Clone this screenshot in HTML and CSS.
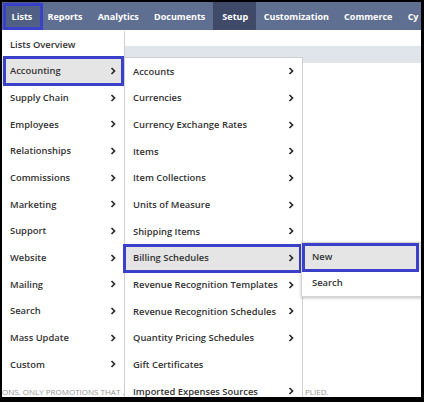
FILE: index.html
```html
<!DOCTYPE html>
<html>
<head>
<meta charset="utf-8">
<link rel="stylesheet" href="styles.css">
</head>
<body>
<div class="frame">
  <nav class="topnav">
    <div class="nav-item active marked">Lists</div>
    <div class="nav-item">Reports</div>
    <div class="nav-item">Analytics</div>
    <div class="nav-item">Documents</div>
    <div class="nav-item current">Setup</div>
    <div class="nav-item">Customization</div>
    <div class="nav-item">Commerce</div>
    <div class="nav-item">Cy</div>
  </nav>
  <main class="page">
    <div class="band"></div>
    <div class="note">
      <span class="note-left">ONS. ONLY PROMOTIONS THAT .</span>
      <span class="note-right">PLIED.</span>
    </div>
  </main>

  <ul class="menu menu-lists">
    <li class="row"><span>Lists Overview</span></li>
    <li class="row hover marked"><span>Accounting</span><svg class="chev" viewBox="0 0 6 8"><path d="M1.5 1 L4.5 4 L1.5 7"/></svg></li>
    <li class="row"><span>Supply Chain</span><svg class="chev" viewBox="0 0 6 8"><path d="M1.5 1 L4.5 4 L1.5 7"/></svg></li>
    <li class="row"><span>Employees</span><svg class="chev" viewBox="0 0 6 8"><path d="M1.5 1 L4.5 4 L1.5 7"/></svg></li>
    <li class="row"><span>Relationships</span><svg class="chev" viewBox="0 0 6 8"><path d="M1.5 1 L4.5 4 L1.5 7"/></svg></li>
    <li class="row"><span>Commissions</span><svg class="chev" viewBox="0 0 6 8"><path d="M1.5 1 L4.5 4 L1.5 7"/></svg></li>
    <li class="row"><span>Marketing</span><svg class="chev" viewBox="0 0 6 8"><path d="M1.5 1 L4.5 4 L1.5 7"/></svg></li>
    <li class="row"><span>Support</span><svg class="chev" viewBox="0 0 6 8"><path d="M1.5 1 L4.5 4 L1.5 7"/></svg></li>
    <li class="row"><span>Website</span><svg class="chev" viewBox="0 0 6 8"><path d="M1.5 1 L4.5 4 L1.5 7"/></svg></li>
    <li class="row"><span>Mailing</span><svg class="chev" viewBox="0 0 6 8"><path d="M1.5 1 L4.5 4 L1.5 7"/></svg></li>
    <li class="row"><span>Search</span><svg class="chev" viewBox="0 0 6 8"><path d="M1.5 1 L4.5 4 L1.5 7"/></svg></li>
    <li class="row"><span>Mass Update</span><svg class="chev" viewBox="0 0 6 8"><path d="M1.5 1 L4.5 4 L1.5 7"/></svg></li>
    <li class="row"><span>Custom</span><svg class="chev" viewBox="0 0 6 8"><path d="M1.5 1 L4.5 4 L1.5 7"/></svg></li>
  </ul>

  <ul class="menu menu-accounting">
    <li class="row"><span>Accounts</span><svg class="chev" viewBox="0 0 6 8"><path d="M1.5 1 L4.5 4 L1.5 7"/></svg></li>
    <li class="row"><span>Currencies</span><svg class="chev" viewBox="0 0 6 8"><path d="M1.5 1 L4.5 4 L1.5 7"/></svg></li>
    <li class="row"><span>Currency Exchange Rates</span><svg class="chev" viewBox="0 0 6 8"><path d="M1.5 1 L4.5 4 L1.5 7"/></svg></li>
    <li class="row"><span>Items</span><svg class="chev" viewBox="0 0 6 8"><path d="M1.5 1 L4.5 4 L1.5 7"/></svg></li>
    <li class="row"><span>Item Collections</span><svg class="chev" viewBox="0 0 6 8"><path d="M1.5 1 L4.5 4 L1.5 7"/></svg></li>
    <li class="row"><span>Units of Measure</span><svg class="chev" viewBox="0 0 6 8"><path d="M1.5 1 L4.5 4 L1.5 7"/></svg></li>
    <li class="row"><span>Shipping Items</span><svg class="chev" viewBox="0 0 6 8"><path d="M1.5 1 L4.5 4 L1.5 7"/></svg></li>
    <li class="row hover marked"><span>Billing Schedules</span><svg class="chev" viewBox="0 0 6 8"><path d="M1.5 1 L4.5 4 L1.5 7"/></svg></li>
    <li class="row"><span>Revenue Recognition Templates</span><svg class="chev" viewBox="0 0 6 8"><path d="M1.5 1 L4.5 4 L1.5 7"/></svg></li>
    <li class="row"><span>Revenue Recognition Schedules</span><svg class="chev" viewBox="0 0 6 8"><path d="M1.5 1 L4.5 4 L1.5 7"/></svg></li>
    <li class="row"><span>Quantity Pricing Schedules</span><svg class="chev" viewBox="0 0 6 8"><path d="M1.5 1 L4.5 4 L1.5 7"/></svg></li>
    <li class="row"><span>Gift Certificates</span></li>
    <li class="row"><span>Imported Expenses Sources</span><svg class="chev" viewBox="0 0 6 8"><path d="M1.5 1 L4.5 4 L1.5 7"/></svg></li>
  </ul>

  <ul class="menu menu-billing">
    <li class="row hover marked"><span>New</span></li>
    <li class="row"><span>Search</span></li>
  </ul>
</div>
</body>
</html>
```

FILE: styles.css
```css
* { box-sizing: border-box; }
html, body { margin: 0; padding: 0; background: #000; }
body { width: 424px; height: 402px; padding: 2px 3px 5px 2px; }

.frame {
  position: relative;
  width: 419px;
  height: 395px;
  background: #fff;
  overflow: hidden;
  font-family: "Open Sans", "Liberation Sans", sans-serif;
}

.topnav {
  display: flex;
  height: 28px;
  background: #5f6f92;
  padding-left: 2px;
}
.nav-item {
  position: relative;
  display: flex;
  align-items: center;
  padding: 0 7.6px;
  color: #fff;
  font-size: 9px;
  font-weight: 700;
  white-space: nowrap;
}
.nav-item.active { background: #506085; }
.nav-item.current { background: #3e4a68; padding: 0 8px 0 9.5px; }
.nav-item.marked::after {
  content: "";
  position: absolute;
  left: -1px; right: -3px; top: 1px; bottom: 0;
  border: 3px solid #3b40c8;
}

.page { padding-top: 16px; }
.band { height: 17px; background: #e0e4eb; }
.note {
  display: flex;
  margin-top: 323px;
  font-size: 8px;
  color: #959595;
  white-space: nowrap;
}
.note-left { width: 122px; }
.note-right { margin-left: 181px; }

.menu {
  position: absolute;
  margin: 0;
  padding: 0;
  list-style: none;
  background: #fff;
  font-size: 9.4px;
  font-weight: 600;
  color: #333;
}
.menu-lists {
  left: 0;
  top: 29px;
  width: 123px;
  border-right: 1px solid #cfcfcf;
  z-index: 1;
}
.menu-accounting {
  left: 122px;
  top: 55px;
  width: 179px;
  border: 1px solid #cfcfcf;
  border-bottom: none;
  z-index: 2;
}
.menu-billing {
  left: 299px;
  top: 240px;
  width: 160px;
  border: 1px solid #d6d6d6;
  box-shadow: 0 1px 3px rgba(0, 0, 0, 0.25);
  z-index: 3;
}

.row {
  position: relative;
  display: flex;
  align-items: center;
  justify-content: space-between;
  height: 26.67px;
  padding: 0 8px;
  white-space: nowrap;
}
.menu-billing .row { padding-left: 10px; }
.row.hover { background: #e5e5e5; }

.chev {
  width: 6px;
  height: 8px;
  fill: none;
  stroke: #2a2a2a;
  stroke-width: 1.7;
}

.row.marked::after {
  content: "";
  position: absolute;
  border: 3px solid #3b40c8;
  pointer-events: none;
}
.menu-lists .row.marked::after { left: 1px; right: 0; top: -2px; bottom: -2px; }
.menu-accounting .row.marked::after { left: -2px; right: 0; top: -1px; bottom: -2px; }
.menu-billing .row.marked::after { left: 0; width: 111px; top: 0; bottom: -2px; }
```
